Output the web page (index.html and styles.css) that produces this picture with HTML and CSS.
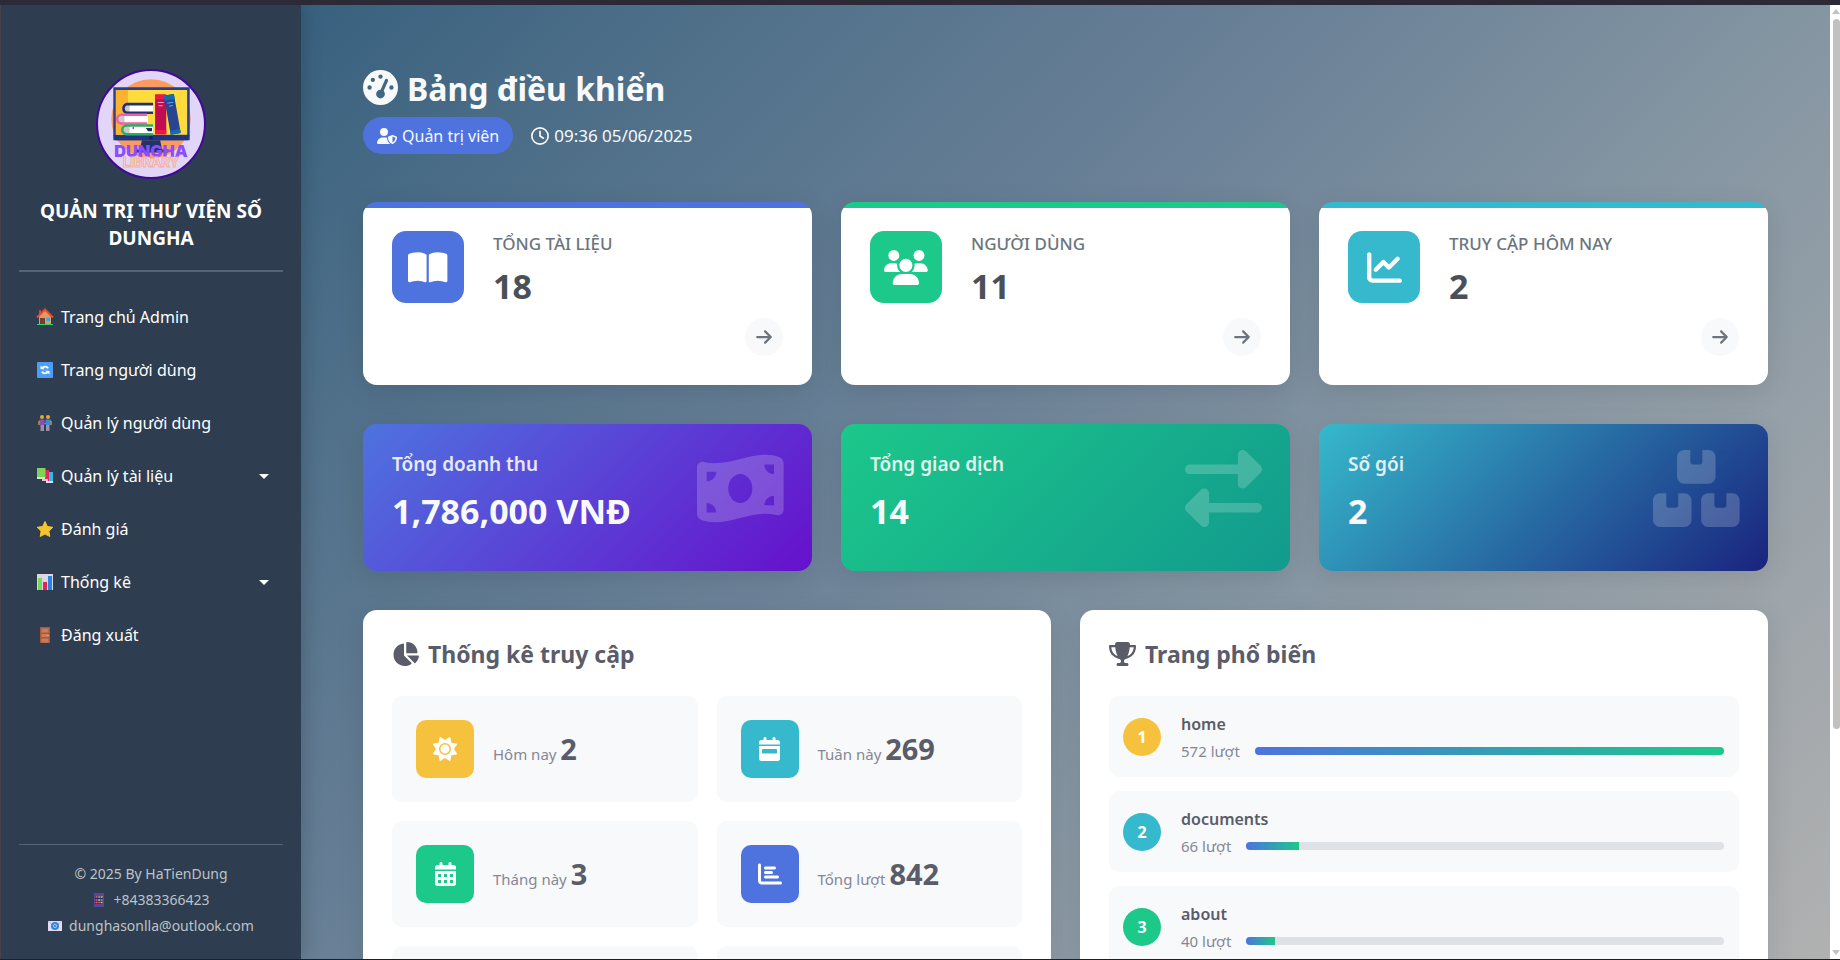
FILE: index.html
```html
<!DOCTYPE html>
<html lang="vi">
<head>
<meta charset="utf-8">
<title>Bảng điều khiển</title>
<link rel="stylesheet" href="styles.css">
</head>
<body>
<svg class="sprite" aria-hidden="true">
  <symbol id="arrow" viewBox="0 0 448 512"><path d="M438.600 278.600c12.500-12.500 12.500-32.800 0-45.300l-160-160c-12.500-12.500-32.800-12.500-45.300 0s-12.500 32.800 0 45.300L338.800 224 32 224c-17.700 0-32 14.300-32 32s14.300 32 32 32l306.700 0L233.400 393.400c-12.500 12.500-12.500 32.800 0 45.300s32.800 12.500 45.300 0l160-160z"/></symbol>
</svg>
<div class="app">
  <aside class="sidebar">
    <div class="brand">
      <svg class="brand-logo" viewBox="0 0 108 108" role="img" aria-label="DungHa Library">
        <defs><clipPath id="disc"><circle cx="54" cy="54" r="53"/></clipPath></defs>
        <circle cx="54" cy="54" r="53" fill="#e2d6f8" stroke="#43089a" stroke-width="2"/>
        <g clip-path="url(#disc)">
          <circle cx="54" cy="49" r="39" fill="#fb9b60"/>
          <path d="M17 18h75v52H17z" fill="#26408b"/>
          <path d="M19.500 20.500h70v44h-70z" fill="#ffdb3d"/>
          <path d="M19.500 20.500h12v44h-12z" fill="#fcb22f"/>
          <path d="M17 65h75l-2 5H19z" fill="#203580"/>
          <circle cx="54" cy="67.500" r="2" fill="#15235d"/>
          <path d="M45 70h18l2 10H43z" fill="#203468"/>
          <path d="M38 79h33v3H38z" fill="#203468"/>
          <path d="M30 35h26v8H30z" fill="#fff"/><path d="M27 35h6v8h-6z" fill="#c9c9d2"/>
          <path d="M56 34.500H30a4.500 4.500 0 0 0 0 8.500h26" fill="none" stroke="#203070" stroke-width="2.500"/>
          <path d="M25 46h26v7H25z" fill="#fff"/><path d="M22 46h6v7h-6z" fill="#c9c9d2"/>
          <path d="M50 45H25a4 4 0 0 0 0 8.500h25" fill="none" stroke="#f45daa" stroke-width="2.500"/>
          <path d="M30 56h26v8H30z" fill="#fff"/><path d="M27 56h6v8h-6z" fill="#c9c9d2"/>
          <path d="M56 55.500H30a4 4 0 0 0 0 8.500h26" fill="none" stroke="#2eac66" stroke-width="2.500"/>
          <path d="M49 58h6v3h-4zM36 57h1v2h-1z" fill="#203050"/>
          <rect x="58" y="25" width="11" height="39" rx="1" fill="#c00d52"/>
          <path d="M58 25h11v5H58zM58 60h11v4H58z" fill="#ef1748"/>
          <path d="M60.500 33h6M61.500 36h4" stroke="#f79abb"/>
          <g transform="rotate(-10 75 45)"><rect x="70" y="25" width="10" height="39" rx="1" fill="#294490"/><path d="M70 25h10v5H70zM70 60h10v4H70z" fill="#0f6cb5"/><path d="M72 33h6M73 36h4" stroke="#58aaf0"/></g>
        </g>
        <text y="86" text-anchor="middle"><tspan class="logo-name" x="54">DUNGHA</tspan><tspan class="logo-sub" x="54" dy="10">LIBRARY</tspan></text>
      </svg>
      <h2 class="brand-title">QUẢN TRỊ THƯ VIỆN SỐ DUNGHA</h2>
    </div>
    <nav class="nav">
      <a class="nav-item" href="#home"><svg class="emoji" viewBox="0 0 18 18"><path d="M3 8l6-6 6 6v8H3z" fill="#e09a68"/><path d="M3 2h2v4L3 8z" fill="#b8543a"/><path d="M1 9.500L9 1.500l8 8" fill="none" stroke="#e8492f" stroke-width="2"/><path d="M4 10h5v6H4z" fill="#704038"/><path d="M10.500 9.500h3.500v3.500h-3.500z" fill="#28aef4"/><path d="M1 16h16v1H1z" fill="#2fd36b"/></svg>Trang chủ Admin</a>
      <a class="nav-item" href="#site"><svg class="emoji" viewBox="0 0 18 18"><rect x="1" y="1" width="16" height="16" rx="1" fill="#4b9df5"/><path d="M4.500 8V4.500L6 6a4.500 4.500 0 0 1 7 1l-2 .8a2.600 2.600 0 0 0-3.600-.6L9 8.500zM13.500 10v3.500L12 12a4.500 4.500 0 0 1-7-1l2-.8a2.600 2.600 0 0 0 3.600.6L9 9.500z" fill="#fff"/></svg>Trang người dùng</a>
      <a class="nav-item" href="#users"><svg class="emoji" viewBox="0 0 18 18"><circle cx="6" cy="3" r="2" fill="#efa52f"/><circle cx="12" cy="3" r="2" fill="#efa52f"/><path d="M3 5.500h5.500V11H4z" fill="#8352b8"/><path d="M9.500 5.500H15L14 11H9.500z" fill="#2f8de4"/><path d="M3 7v4M15 7v4M8.500 9.500h1" stroke="#efa52f" stroke-width="1.200"/><path d="M4.500 11H8v6H4.500zM10 11h3.500v6H10z" fill="#9a8fa6"/></svg>Quản lý người dùng</a>
      <a class="nav-item" href="#docs"><svg class="emoji" viewBox="0 0 18 18"><path d="M10 5h7v11h-7z" fill="#34b5ee"/><path d="M10 14h7v2h-7z" fill="#d2e6f5"/><path d="M6 3h7v11H6z" fill="#e22a5f"/><path d="M6 12h6v2H6z" fill="#f1bccb"/><path d="M1 1h8.500v10H1z" fill="#7fd35a"/><path d="M1 10h8v2H1z" fill="#d2efc8"/></svg>Quản lý tài liệu<span class="caret"></span></a>
      <a class="nav-item" href="#reviews"><svg class="emoji" viewBox="0 0 18 18"><path d="M9 1.500l2.400 5 5.400.8-3.900 3.900.9 5.300L9 14l-4.800 2.500.9-5.300-3.900-3.900 5.400-.8z" fill="#f5c52f" stroke="#f5c52f" stroke-linejoin="round"/></svg>Đánh giá</a>
      <a class="nav-item" href="#stats"><svg class="emoji" viewBox="0 0 18 18"><rect x="1" y="1" width="16" height="16" fill="#dcd5e6"/><path d="M2 5h4v12H2z" fill="#76d95c"/><path d="M7 9h4v8H7z" fill="#dc2858"/><path d="M12 3h4v14h-4z" fill="#2486e2"/></svg>Thống kê<span class="caret"></span></a>
      <a class="nav-item" href="#logout"><svg class="emoji" viewBox="0 0 18 18"><rect x="4" y="1" width="10" height="16" fill="#a55b3f"/><path d="M5.500 2.500h7v4h-7zM5.500 8h7v3h-7zM5.500 12.500h7v4h-7z" fill="#cb7b58"/><circle cx="12" cy="9.500" r=".8" fill="#efb65d"/></svg>Đăng xuất</a>
    </nav>
    <footer class="side-foot">
      <span>© 2025 By HaTienDung</span>
      <span class="contact"><svg class="emoji-small" viewBox="0 0 14 14"><rect x="2" y="0" width="10" height="14" fill="#5b4696"/><path d="M3 3h8v8H3z" fill="#30255a"/><path d="M3.500 4h2M3.500 9.500h2" stroke="#f36b4c" stroke-width="1.500"/><path d="M6.200 4h2M8.700 7h2" stroke="#58b8f3" stroke-width="1.500"/><path d="M8.700 4h2M6.200 7h2M8.700 9.500h2" stroke="#f8c543" stroke-width="1.500"/><path d="M3.500 7h2M6.200 9.500h2" stroke="#e65a9d" stroke-width="1.500"/></svg>+84383366423</span>
      <span class="contact"><svg class="emoji-small" viewBox="0 0 14 14"><path d="M0 2h14v10H0z" fill="#e4dcf3"/><path d="M0 2l7 6 7-6" fill="none" stroke="#c8b6e2"/><circle cx="7" cy="7" r="4" fill="#3784df"/><circle cx="7" cy="7" r="1.600" fill="none" stroke="#b9d6f6" stroke-width=".8"/></svg>dunghasonlla@outlook.com</span>
    </footer>
  </aside>

  <main class="main">
    <header class="page-head">
      <h1 class="page-title"><svg class="title-icon" viewBox="0 0 512 512"><path d="M0 256a256 256 0 1 1 512 0A256 256 0 1 1 0 256zM288 96a32 32 0 1 0 -64 0 32 32 0 1 0 64 0zM256 416c35.300 0 64-28.700 64-64c0-17.400-6.900-33.100-18.100-44.600L366 161.700c5.300-12.100-.2-26.300-12.300-31.600s-26.300 .2-31.600 12.300L257.900 288c-.6 0-1.300 0-1.900 0c-35.300 0-64 28.700-64 64s28.700 64 64 64zM176 144a32 32 0 1 0 -64 0 32 32 0 1 0 64 0zM96 288a32 32 0 1 0 0-64 32 32 0 1 0 0 64zm352-32a32 32 0 1 0 -64 0 32 32 0 1 0 64 0z"/></svg><span class="title-text">Bảng điều khiển</span></h1>
      <div class="meta">
        <span class="role"><svg class="role-icon" viewBox="0 0 640 512"><path d="M224 256A128 128 0 1 0 224 0a128 128 0 1 0 0 256zm-45.700 48C79.800 304 0 383.800 0 482.300C0 498.700 13.300 512 29.700 512H418.300c1.800 0 3.500-.2 5.300-.5c-76.300-55.100-99.800-141-103.100-200.200c-16.100-4.800-33.100-7.300-50.700-7.300H178.300zm308.800-78.300l-120 48C358 277.400 352 286.200 352 296c0 63.300 25.900 168.800 134.800 214.200c5.900 2.500 12.600 2.500 18.500 0C614.100 464.800 640 359.300 640 296c0-9.800-6-18.600-15.100-22.300l-120-48c-5.700-2.300-12.100-2.300-17.800 0zM591.400 312c-3.900 50.700-27.200 116.700-95.400 149.700V273.800L591.400 312z"/></svg>Quản trị viên</span>
        <span class="time"><svg class="time-icon" viewBox="0 0 512 512"><path d="M464 256A208 208 0 1 1 48 256a208 208 0 1 1 416 0zM0 256a256 256 0 1 0 512 0A256 256 0 1 0 0 256zM232 120V256c0 8 4 15.500 10.700 20l96 64c11 7.400 25.900 4.400 33.300-6.700s4.400-25.900-6.700-33.300L280 243.200V120c0-13.300-10.700-24-24-24s-24 10.700-24 24z"/></svg>09:36 05/06/2025</span>
      </div>
    </header>

    <section class="row three">
      <article class="card summary blue">
        <div class="tile big"><svg viewBox="0 0 576 512"><path d="M249.600 471.500c10.800 3.800 22.400-4.100 22.400-15.500V78.600c0-4.200-1.600-8.400-5-11C247.400 52 202.400 32 144 32C93.500 32 46.300 45.300 18.100 56.100C6.800 60.500 0 71.700 0 83.800V454.100c0 11.900 12.800 20.200 24.100 16.500C55.600 460.100 105.500 448 144 448c33.900 0 79 14 105.600 23.500zm76.800 0C353 462 398.100 448 432 448c38.500 0 88.400 12.100 119.900 22.600c11.300 3.800 24.100-4.600 24.100-16.500V83.800c0-12.100-6.800-23.300-18.100-27.600C529.700 45.300 482.500 32 432 32c-58.400 0-103.400 20-123 35.600c-3.300 2.600-5 6.800-5 11V456c0 11.400 11.700 19.300 22.400 15.500z"/></svg></div>
        <div class="summary-text"><h3>TỔNG TÀI LIỆU</h3><p>18</p></div>
        <a class="go" href="#docs" aria-label="Tổng tài liệu"><svg><use href="#arrow"/></svg></a>
      </article>
      <article class="card summary green">
        <div class="tile big"><svg viewBox="0 0 640 512"><path d="M144 0a80 80 0 1 1 0 160A80 80 0 1 1 144 0zM512 0a80 80 0 1 1 0 160A80 80 0 1 1 512 0zM0 298.700C0 239.800 47.800 192 106.700 192h42.700c15.900 0 31 3.500 44.600 9.700c-1.300 7.200-1.900 14.700-1.900 22.300c0 38.200 16.800 72.500 43.300 96c-.2 0-.4 0-.7 0H21.300C9.600 320 0 310.400 0 298.700zM405.300 320c-.2 0-.4 0-.7 0c26.600-23.500 43.300-57.800 43.300-96c0-7.600-.7-15-1.900-22.300c13.600-6.300 28.700-9.700 44.600-9.700h42.700C592.200 192 640 239.800 640 298.700c0 11.800-9.600 21.300-21.300 21.300H405.300zM224 224a96 96 0 1 1 192 0 96 96 0 1 1 -192 0zM128 485.300C128 411.700 187.700 352 261.300 352H378.700C452.300 352 512 411.700 512 485.300c0 14.700-11.900 26.700-26.700 26.700H154.700c-14.700 0-26.700-11.900-26.700-26.700z"/></svg></div>
        <div class="summary-text"><h3>NGƯỜI DÙNG</h3><p>11</p></div>
        <a class="go" href="#users" aria-label="Người dùng"><svg><use href="#arrow"/></svg></a>
      </article>
      <article class="card summary cyan">
        <div class="tile big"><svg viewBox="0 0 512 512"><path d="M64 64c0-17.700-14.300-32-32-32S0 46.300 0 64V400c0 44.200 35.800 80 80 80H480c17.700 0 32-14.300 32-32s-14.300-32-32-32H80c-8.800 0-16-7.200-16-16V64zm406.600 86.600c12.500-12.500 12.500-32.800 0-45.300s-32.800-12.500-45.300 0L320 210.700l-57.400-57.400c-12.500-12.500-32.800-12.500-45.300 0l-112 112c-12.500 12.500-12.500 32.800 0 45.300s32.800 12.500 45.300 0L240 221.300l57.400 57.400c12.500 12.500 32.800 12.500 45.300 0l128-128z"/></svg></div>
        <div class="summary-text"><h3>TRUY CẬP HÔM NAY</h3><p>2</p></div>
        <a class="go" href="#visits" aria-label="Truy cập hôm nay"><svg><use href="#arrow"/></svg></a>
      </article>
    </section>

    <section class="row three">
      <article class="card total revenue">
        <div><h3>Tổng doanh thu</h3><p>1,786,000 VNĐ</p></div>
        <svg class="total-icon" viewBox="0 0 576 512"><path d="M0 112.500V422.300c0 18 10.100 35 27 41.300c87 32.500 174 10.300 261-11.900c79.800-20.300 159.600-40.700 239.300-18.900c23 6.300 48.700-9.500 48.700-33.400V89.700c0-18-10.100-35-27-41.300C462 15.900 375 38.100 288 60.300C208.200 80.600 128.400 100.900 48.700 79.100C25.600 72.800 0 88.600 0 112.500zM288 352c-44.200 0-80-43-80-96s35.800-96 80-96s80 43 80 96s-35.800 96-80 96zM64 352c35.300 0 64 28.700 64 64H64V352zm64-208c0 35.300-28.700 64-64 64V144h64zM512 304v64H448c0-35.300 28.700-64 64-64zM448 96h64v64c-35.300 0-64-28.700-64-64z"/></svg>
      </article>
      <article class="card total deals">
        <div><h3>Tổng giao dịch</h3><p>14</p></div>
        <svg class="total-icon" viewBox="0 0 512 512"><path d="M32 96l320 0V32c0-12.900 7.800-24.600 19.800-29.600s25.700-2.200 34.900 6.900l96 96c6 6 9.400 14.100 9.400 22.600s-3.400 16.600-9.400 22.600l-96 96c-9.200 9.200-22.900 11.900-34.900 6.900s-19.800-16.600-19.800-29.600V160L32 160c-17.700 0-32-14.300-32-32s14.300-32 32-32zM480 352c17.700 0 32 14.300 32 32s-14.300 32-32 32H160v64c0 12.900-7.800 24.600-19.800 29.600s-25.700 2.200-34.900-6.900l-96-96c-6-6-9.400-14.100-9.400-22.600s3.400-16.600 9.400-22.600l96-96c9.200-9.200 22.900-11.900 34.900-6.900s19.800 16.600 19.800 29.600l0 64H480z"/></svg>
      </article>
      <article class="card total packs">
        <div><h3>Số gói</h3><p>2</p></div>
        <svg class="total-icon" viewBox="0 0 576 512"><path d="M248 0H208c-26.500 0-48 21.500-48 48V176c0 26.500 21.500 48 48 48H368c26.500 0 48-21.500 48-48V48c0-26.500-21.500-48-48-48H328V80c0 8.800-7.200 16-16 16H264c-8.800 0-16-7.200-16-16V0zM48 288c-26.500 0-48 21.500-48 48V464c0 26.500 21.500 48 48 48H208c26.500 0 48-21.500 48-48V336c0-26.500-21.500-48-48-48H168v80c0 8.800-7.200 16-16 16H104c-8.800 0-16-7.200-16-16V288H48zM368 512H528c26.500 0 48-21.500 48-48V336c0-26.500-21.500-48-48-48H488v80c0 8.800-7.200 16-16 16H424c-8.800 0-16-7.200-16-16V288H368c-26.500 0-48 21.500-48 48V464c0 26.500 21.500 48 48 48z"/></svg>
      </article>
    </section>

    <section class="row two">
      <article class="card panel">
        <h2 class="panel-title"><svg viewBox="0 0 576 512"><path d="M304 240V16.600c0-9 7-16.600 16-16.600C443.700 0 544 100.300 544 224c0 9-7.600 16-16.600 16H304zM32 272C32 150.700 122.100 50.300 239 34.300c9.200-1.300 17 6.100 17 15.400V288L412.500 444.500c6.700 6.700 6.200 17.700-1.500 23.100C371.800 495.600 323.800 512 272 512C139.500 512 32 404.600 32 272zm526.400 16c9.300 0 16.600 7.800 15.400 17c-7.700 55.900-34.600 105.600-73.900 142.300c-6 5.600-15.400 5.200-21.200-.7L320 288H558.400z"/></svg>Thống kê truy cập</h2>
        <div class="stats">
          <div class="stat yellow"><div class="tile"><svg viewBox="0 0 512 512"><path d="M361.500 1.200c5 2.100 8.600 6.600 9.600 11.900L391 121l107.900 19.800c5.300 1 9.800 4.600 11.900 9.600s1.500 10.700-1.600 15.200L446.900 256l62.300 90.300c3.100 4.500 3.700 10.200 1.600 15.200s-6.600 8.600-11.900 9.600L391 391 371.100 498.900c-1 5.300-4.600 9.800-9.600 11.900s-10.700 1.500-15.200-1.600L256 446.900l-90.300 62.300c-4.500 3.100-10.200 3.700-15.200 1.600s-8.600-6.600-9.600-11.900L121 391 13.100 371.100c-5.300-1-9.800-4.600-11.900-9.600s-1.500-10.700 1.600-15.200L65.100 256 2.800 165.700c-3.100-4.500-3.700-10.200-1.600-15.200s6.600-8.600 11.900-9.600L121 121 140.900 13.100c1-5.300 4.600-9.800 9.600-11.900s10.700-1.500 15.200 1.600L256 65.100 346.300 2.800c4.500-3.100 10.200-3.700 15.200-1.600zM160 256a96 96 0 1 1 192 0 96 96 0 1 1 -192 0zm224 0a128 128 0 1 0 -256 0 128 128 0 1 0 256 0z"/></svg></div><p>Hôm nay <strong>2</strong></p></div>
          <div class="stat cyan"><div class="tile"><svg viewBox="0 0 448 512"><path d="M128 0c17.700 0 32 14.300 32 32V64H288V32c0-17.700 14.300-32 32-32s32 14.300 32 32V64h48c26.500 0 48 21.500 48 48v48H0V112C0 85.500 21.500 64 48 64H96V32c0-17.700 14.300-32 32-32zM0 192H448V464c0 26.500-21.500 48-48 48H48c-26.500 0-48-21.500-48-48V192zm80 64c-8.800 0-16 7.200-16 16v64c0 8.800 7.200 16 16 16H368c8.800 0 16-7.200 16-16V272c0-8.800-7.200-16-16-16H80z"/></svg></div><p>Tuần này <strong>269</strong></p></div>
          <div class="stat green"><div class="tile"><svg viewBox="0 0 448 512"><path fill-rule="evenodd" d="M128 0c17.700 0 32 14.300 32 32V64H288V32c0-17.700 14.300-32 32-32s32 14.300 32 32V64h48c26.500 0 48 21.500 48 48v48H0V112C0 85.500 21.500 64 48 64H96V32c0-17.700 14.300-32 32-32zM0 192H448V464c0 26.500-21.500 48-48 48H48c-26.500 0-48-21.500-48-48V192zM64 256v64h64v-64zM192 256v64h64v-64zM320 256v64h64v-64zM64 384v64h64v-64zM192 384v64h64v-64zM320 384v64h64v-64z"/></svg></div><p>Tháng này <strong>3</strong></p></div>
          <div class="stat blue"><div class="tile"><svg viewBox="0 0 512 512"><path d="M32 32c17.700 0 32 14.300 32 32V400c0 8.800 7.200 16 16 16H480c17.700 0 32 14.300 32 32s-14.300 32-32 32H80c-44.200 0-80-35.800-80-80V64C0 46.300 14.300 32 32 32zm96 96c0-17.700 14.300-32 32-32l192 0c17.700 0 32 14.300 32 32s-14.300 32-32 32H160c-17.700 0-32-14.300-32-32zm32 64H288c17.700 0 32 14.300 32 32s-14.300 32-32 32H160c-17.700 0-32-14.300-32-32s14.300-32 32-32zm0 96H416c17.700 0 32 14.300 32 32s-14.300 32-32 32H160c-17.700 0-32-14.300-32-32s14.300-32 32-32z"/></svg></div><p>Tổng lượt <strong>842</strong></p></div>
          <div class="stat"></div>
          <div class="stat"></div>
        </div>
      </article>
      <article class="card panel">
        <h2 class="panel-title"><svg viewBox="0 0 576 512"><path d="M400 0H176c-26.500 0-48.100 21.800-47.100 48.200c.2 5.300 .4 10.600 .7 15.800H24C10.700 64 0 74.700 0 88c0 92.600 33.500 157 78.500 200.700c44.300 43.100 98.300 64.800 138.100 75.800c23.400 6.500 39.400 26 39.400 45.600c0 20.900-17 37.900-37.900 37.900H192c-17.700 0-32 14.300-32 32s14.300 32 32 32H384c17.700 0 32-14.300 32-32s-14.300-32-32-32H357.900C337 448 320 431 320 410.100c0-19.600 15.900-39.200 39.400-45.600c39.900-11 93.900-32.700 138.200-75.800C542.500 245 576 180.600 576 88c0-13.300-10.700-24-24-24H446.400c.3-5.200 .5-10.400 .7-15.800C448.100 21.800 426.500 0 400 0zM48.900 112h84.400c9.100 90.100 29.200 150.300 51.900 190.600c-24.900-11-50.800-26.500-73.200-48.300c-32-31.100-58-76-63-142.300zM464.100 254.300c-22.400 21.800-48.300 37.300-73.200 48.300c22.700-40.300 42.800-100.500 51.900-190.600h84.400c-5.100 66.300-31.100 111.200-63 142.300z"/></svg>Trang phổ biến</h2>
        <ol class="ranks">
          <li class="rank yellow"><span class="place">1</span><div class="rank-body"><h3>home</h3><div class="rank-line"><span>572 lượt</span><div class="bar"><div class="fill" style="width:100%"></div></div></div></div></li>
          <li class="rank cyan"><span class="place">2</span><div class="rank-body"><h3>documents</h3><div class="rank-line"><span>66 lượt</span><div class="bar"><div class="fill" style="width:11%"></div></div></div></div></li>
          <li class="rank green"><span class="place">3</span><div class="rank-body"><h3>about</h3><div class="rank-line"><span>40 lượt</span><div class="bar"><div class="fill" style="width:6%"></div></div></div></div></li>
        </ol>
      </article>
    </section>
  </main>
  <div class="scroll" aria-hidden="true"><span class="scroll-up"></span><span class="scroll-thumb"></span><span class="scroll-down"></span></div>
</div>
</body>
</html>
```
FILE: styles.css
```css
* { box-sizing: border-box; }
body, h1, h2, h3, p, ol { margin: 0; padding: 0; }
body {
  font-family: "Noto Sans", "Open Sans", sans-serif;
  font-size: 16px;
  line-height: 24px;
  color: #5a5c69;
  overflow: hidden;
}
a { color: inherit; text-decoration: none; }
svg { fill: currentColor; flex: none; }
.sprite { display: none; }
.blue { --tone: #4e73df; }
.green { --tone: #1cc88a; }
.cyan { --tone: #36b9cc; }
.yellow { --tone: #f6c23e; }

.app {
  display: flex;
  height: 100vh;
  border-top: 5px solid #2b2a36;
  border-bottom: 1px solid #1d1f2d;
  overflow: hidden;
}

/* Sidebar */
.sidebar {
  display: flex;
  flex-direction: column;
  flex: none;
  width: 301px;
  padding: 64px 18px 20px;
  border-left: 1px solid #46434d;
  background: #2e3e50;
  color: #fff;
  box-shadow: 4px 0 16px rgba(0, 0, 0, .15);
  z-index: 1;
}
.brand {
  display: flex;
  flex-direction: column;
  align-items: center;
  padding-bottom: 18px;
  border-bottom: 2px solid #566573;
}
.brand-logo { width: 110px; height: 110px; }
.logo-name { font: 900 16px "Inter", "Liberation Sans", sans-serif; fill: #8a4dff; }
.logo-sub { font: 700 13px "Inter", "Liberation Sans", sans-serif; fill: #e8dcf6; stroke: #f6b09a; stroke-width: 1px; }
.brand-title {
  margin-top: 19px;
  font-size: 19px;
  line-height: 27px;
  font-weight: 700;
  text-align: center;
}
.nav { display: flex; flex-direction: column; gap: 5px; padding-top: 21px; }
.nav-item {
  display: flex;
  align-items: center;
  gap: 7px;
  height: 48px;
  padding: 0 14px 0 17px;
}
.emoji { width: 18px; height: 18px; }
.caret {
  margin-left: auto;
  border: 5px solid transparent;
  border-top-color: #fff;
  border-bottom: 0;
}
.side-foot {
  display: flex;
  flex-direction: column;
  align-items: center;
  margin-top: auto;
  padding-top: 16px;
  border-top: 1px solid #566573;
  font-size: 14px;
  line-height: 26px;
  color: #bcc2c8;
}
.contact { display: flex; align-items: center; gap: 7px; }
.emoji-small { width: 14px; height: 14px; }

/* Main column */
.main {
  flex: 1;
  min-width: 0;
  padding: 62px 62px 0;
  overflow: hidden;
  background: linear-gradient(135deg, #38617f, #4d6e88 15%, #6c8298 42%, #8495a2 61%, #b1b1b1);
}
.page-head { margin-bottom: 48px; color: #f8f9fa; }
.page-title {
  display: flex;
  align-items: center;
  gap: 9px;
  font-size: 32px;
  line-height: 40px;
  font-weight: 700;
}
.title-text { padding-top: 4px; line-height: 36px; }
.title-icon { width: 35px; height: 35px; }
.meta { display: flex; align-items: center; gap: 18px; margin-top: 10px; }
.role {
  display: flex;
  align-items: center;
  gap: 5px;
  height: 37px;
  padding: 0 14px;
  border-radius: 20px;
  background: #4e73df;
}
.role-icon { width: 20px; height: 16px; }
.time { display: flex; align-items: center; gap: 5px; font-size: 17px; }
.time-icon { width: 18px; height: 18px; }

.row { display: grid; gap: 29px; margin-bottom: 39px; }
.three { grid-template-columns: repeat(3, 1fr); }
.two { grid-template-columns: repeat(2, 1fr); }
.card { border-radius: 14px; box-shadow: 0 6px 28px rgba(0, 0, 0, .1); overflow: hidden; }

.tile {
  display: grid;
  place-items: center;
  flex: none;
  width: 58px;
  height: 58px;
  border-radius: 10px;
  background: var(--tone);
  color: #fff;
}
.tile svg { height: 24px; }
.big { width: 72px; height: 72px; border-radius: 14px; }
.big svg { height: 35px; }

.summary {
  display: grid;
  grid-template-columns: auto 1fr;
  column-gap: 29px;
  row-gap: 11px;
  padding: 29px;
  background: linear-gradient(var(--tone) 6px, #fff 6px);
}
.summary h3 { font-size: 17px; line-height: 26px; font-weight: 500; color: #6c757d; }
.summary p { margin-top: 8px; font-size: 34px; line-height: 42px; font-weight: 700; color: #495057; }
.go {
  display: grid;
  place-items: center;
  grid-column: 2;
  justify-self: end;
  width: 38px;
  height: 38px;
  border-radius: 50%;
  background: #f8f9fa;
  color: #6c757d;
}
.go svg { width: 16px; height: 18px; }

.total {
  display: flex;
  justify-content: space-between;
  align-items: flex-start;
  padding: 26px 28px 39px 29px;
  color: #f8f9fa;
}
.total h3 { font-size: 19px; line-height: 28px; font-weight: 600; opacity: .9; }
.total p { margin-top: 12px; font-size: 34px; line-height: 42px; font-weight: 700; }
.total-icon { height: 77px; opacity: .2; }
.revenue { background: linear-gradient(135deg, #4e73df, #6610cc); }
.deals { background: linear-gradient(135deg, #1cc88a, #129a8e); }
.packs { background: linear-gradient(135deg, #36b9cc, #1a237e); }

.panel { padding: 28px 29px 29px; background: #fff; }
.panel-title {
  display: flex;
  align-items: center;
  gap: 9px;
  margin-bottom: 26px;
  font-size: 23px;
  line-height: 32px;
  font-weight: 700;
}
.panel-title svg { height: 24px; }
.stats { display: grid; grid-template-columns: repeat(2, 1fr); gap: 19px; }
.stat {
  display: flex;
  align-items: center;
  gap: 19px;
  min-height: 106px;
  padding: 24px;
  border-radius: 10px;
  background: #f8f9fa;
}
.stat p { padding-top: 5px; font-size: 15px; color: #858796; }
.stat strong { font-size: 29px; color: #5a5c69; }

.ranks { display: flex; flex-direction: column; gap: 14px; list-style: none; }
.rank {
  display: flex;
  align-items: center;
  gap: 20px;
  height: 81px;
  padding: 0 15px 0 14px;
  border-radius: 10px;
  background: #f8f9fa;
}
.place {
  display: grid;
  place-items: center;
  width: 38px;
  height: 38px;
  border-radius: 50%;
  background: var(--tone);
  font-weight: 700;
  color: #fff;
}
.rank-body { flex: 1; }
.rank h3 { font-size: 16px; line-height: 28px; font-weight: 600; }
.rank-line { display: flex; align-items: center; gap: 15px; font-size: 15px; line-height: 26px; color: #858796; }
.bar { flex: 1; height: 8px; border-radius: 4px; background: #dee2e6; overflow: hidden; }
.fill { height: 100%; background: linear-gradient(90deg, #4e73df, #1cc88a); }

/* Scroll track */
.scroll {
  display: flex;
  flex-direction: column;
  align-items: flex-end;
  flex: none;
  width: 10px;
  padding: 4px 0;
  background: #fff;
}
.scroll-up { border: 4px solid transparent; border-bottom: 5px solid #c1c1c1; border-top: 0; }
.scroll-thumb { width: 7px; height: 75%; margin: 5px 0 auto; border-radius: 4px; background: #c1c1c1; }
.scroll-down { border: 4px solid transparent; border-top: 5px solid #c1c1c1; border-bottom: 0; }
```
